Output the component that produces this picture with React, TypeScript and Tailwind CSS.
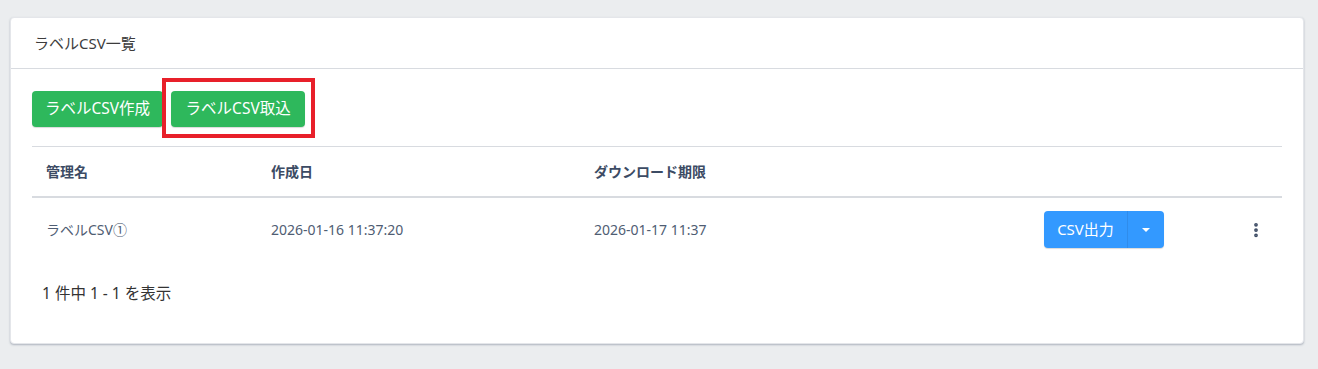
import { EllipsisVertical } from "lucide-react";

const font = { fontFamily: '"Noto Sans", "Noto Sans CJK JP", sans-serif' };

export default function App() {
  return (
    <div className="min-h-[369px] bg-[#ebedef] pt-[17px] pl-[10px] pr-[14px]" style={font}>
      <div className="bg-white rounded-[4px] shadow-[0_1px_2px_rgba(60,75,100,0.35)] border border-[#e4e6ea]">
        {/* header */}
        <div className="h-[51px] flex items-center px-[23px] border-b border-[#d8dbe0] text-[15px] text-[#3c3c3c]">
          ラベルCSV一覧
        </div>

        <div className="px-[21px] pt-[22px] pb-[38px]">
          <div className="flex gap-2">
            <button className="h-9 px-[13px] rounded-[4px] bg-[#2eb85c] text-white text-[15.5px] shadow-[0_1px_1px_rgba(0,0,0,0.15)]">
              ラベルCSV作成
            </button>
            <div className="relative">
              <button className="h-9 px-[14.5px] rounded-[4px] bg-[#2eb85c] text-white text-[15.5px] shadow-[0_1px_1px_rgba(0,0,0,0.15)]">
                ラベルCSV取込
              </button>
              <div className="absolute -left-[9px] -top-[13px] -right-[10px] h-[60px] border-4 border-[#e8202a] pointer-events-none" />
            </div>
          </div>

          <table className="mt-[19px] w-full border-collapse text-[14px] text-[#4f5d73]">
            <thead>
              <tr className="border-t border-[#d8dbe0] border-b-2">
                <th className="w-[225px] h-[50px] pl-[14px] text-left font-semibold text-[#3c4b64]">管理名</th>
                <th className="w-[323px] pl-[14px] text-left font-semibold text-[#3c4b64]">作成日</th>
                <th className="pl-[14px] text-left font-semibold text-[#3c4b64]">ダウンロード期限</th>
                <th className="w-[196px]" />
                <th className="w-[56px]" />
              </tr>
            </thead>
            <tbody>
              <tr>
                <td className="pl-[14px] h-[65px]">ラベルCSV①</td>
                <td className="pl-[14px]">2026-01-16 11:37:20</td>
                <td className="pl-[14px]">2026-01-17 11:37</td>
                <td className="pl-[14px]">
                  <div className="flex w-[120px] h-[37px] rounded-[4px] bg-[#3399ff] text-white shadow-[0_1px_1px_rgba(0,0,0,0.15)]">
                    <span className="w-[84px] flex items-center justify-center text-[15px] border-r border-[#2f8ceb]">
                      CSV出力
                    </span>
                    <span className="flex-1 flex items-center justify-center">
                      <span className="w-0 h-0 border-l-[4px] border-r-[4px] border-t-[4px] border-l-transparent border-r-transparent border-t-white" />
                    </span>
                  </div>
                </td>
                <td>
                  <div className="flex justify-center pl-[3px]">
                    <EllipsisVertical size={18} strokeWidth={3} className="text-[#3c4b64]" />
                  </div>
                </td>
              </tr>
            </tbody>
          </table>

          <div className="mt-[20px] pl-[10px] text-[15.5px] text-[#333]">1 件中 1 - 1 を表示</div>
        </div>
      </div>
    </div>
  );
}
